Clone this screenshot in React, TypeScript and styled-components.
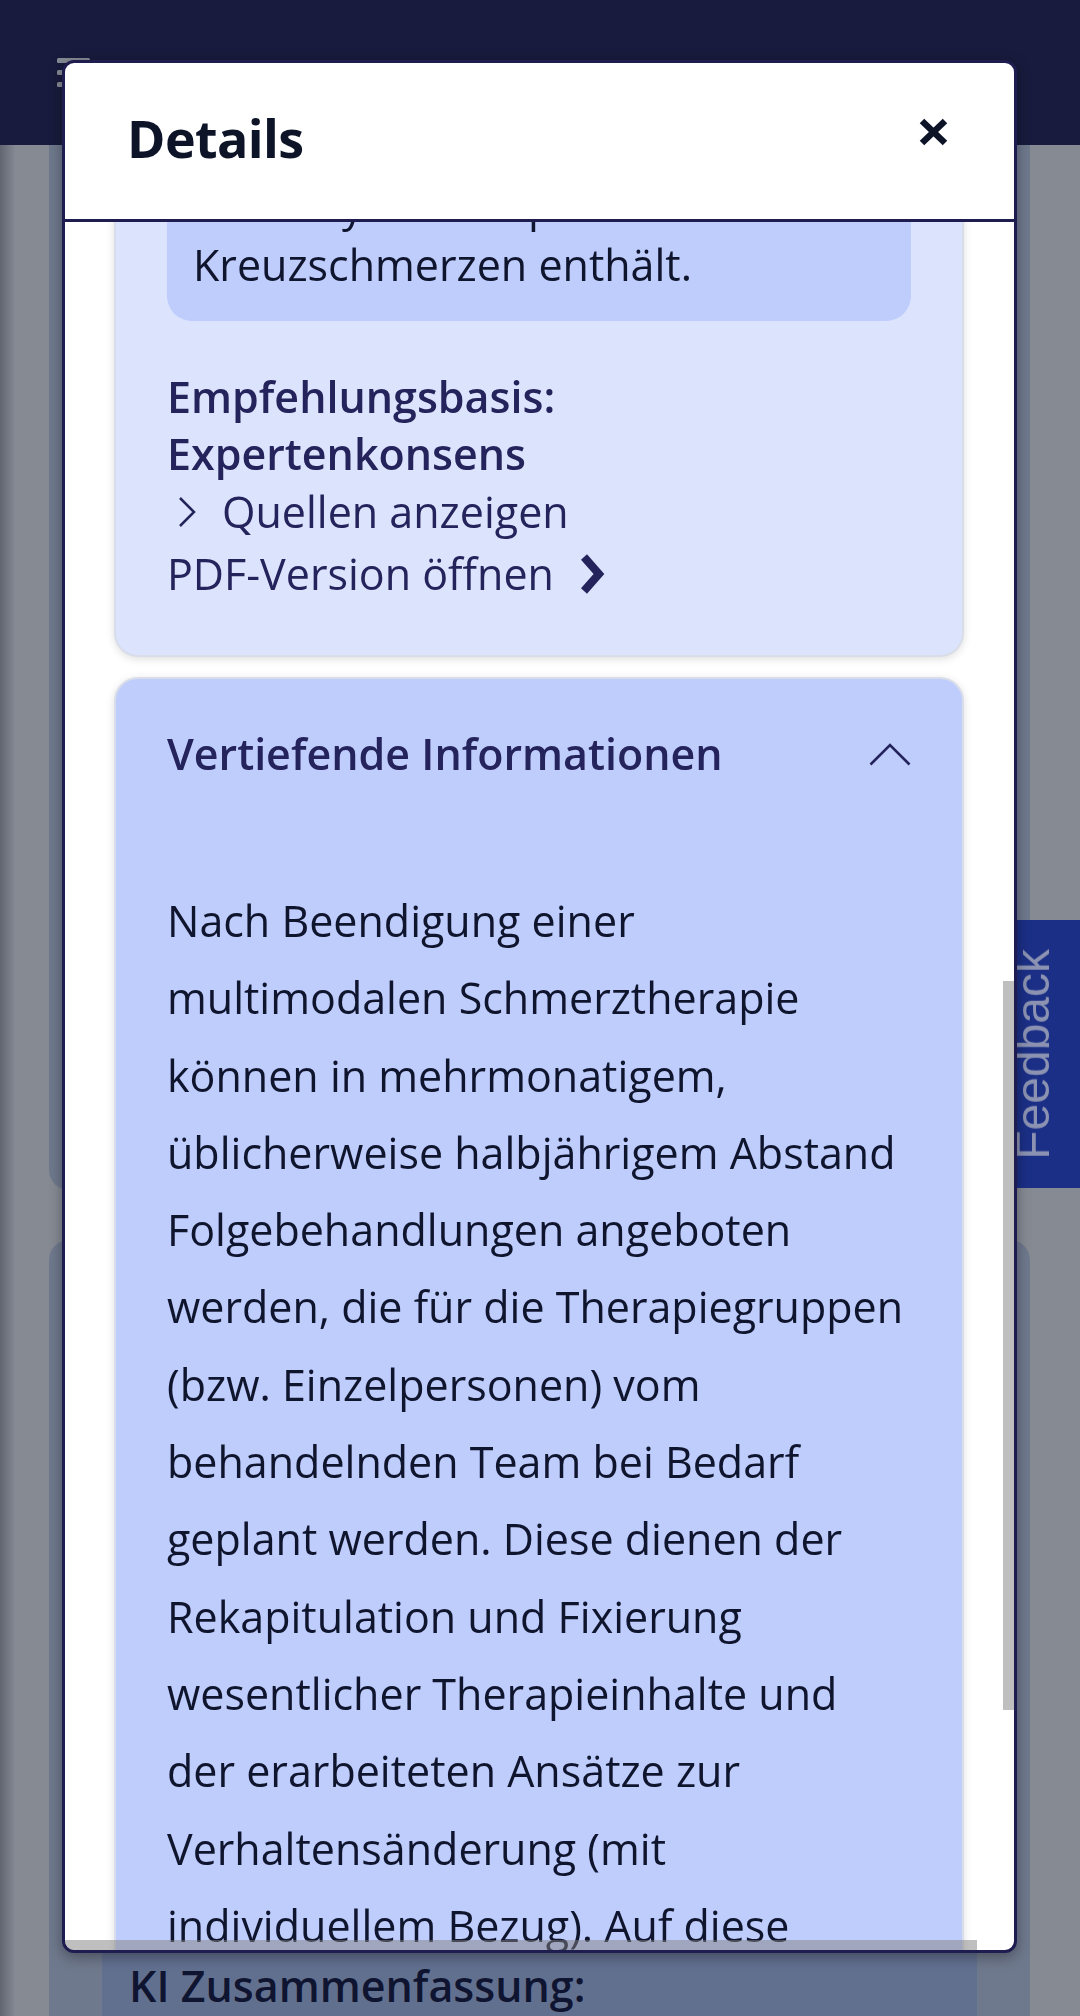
import React, { useLayoutEffect, useRef } from "react";
import styled, { createGlobalStyle } from "styled-components";


const GlobalStyle = createGlobalStyle`
	html, body {
		margin: 0;
		padding: 0;
	}

	body {
		width: 1080px;
		height: 2016px;
		overflow: hidden;
		background: #ffffff;
		font-family: "Open Sans", "Noto Sans", sans-serif;
	}

	* {
		box-sizing: border-box;
	}
`;


const NAVY = "#25235b";
const INK = "#10152e";


// ---------- page under the dialog ----------

const Page = styled.div`
	position: relative;
	width: 1080px;
	height: 2016px;
	overflow: hidden;
	background: linear-gradient(to right, #b3b5bb 0, #ffffff 16px);
`;

const TopBar = styled.header`
	height: 145px;
	background: #232153;
	display: flex;
	align-items: center;
	padding-left: 57px;
`;

const Main = styled.main`
	display: flex;
	flex-direction: column;
	gap: 50px;
	padding: 0 50px 0 49px;
`;

const BackCard = styled.div<{ $height: number; $radius: string }>`
	height: ${p => p.$height}px;
	background: #d1ddf3;
	border-radius: ${p => p.$radius};
`;

const SummaryBar = styled.div`
	position: fixed;
	left: 102px;
	top: 1925px;
	width: 875px;
	height: 110px;
	padding: 32px 27px 0;
	background: #b7cbf9;
	font-size: 43px;
	line-height: 57px;
	font-weight: 600;
	color: #111539;
`;

const Overlay = styled.div`
	position: fixed;
	inset: 0;
	background: rgba(13, 21, 39, 0.5);
	z-index: 10;
`;

const FeedbackTab = styled.button`
	position: fixed;
	left: 1005px;
	top: 920px;
	width: 75px;
	height: 268px;
	padding: 0;
	border: none;
	background: #1b2f86;
	display: flex;
	align-items: center;
	z-index: 20;

	span {
		writing-mode: vertical-rl;
		transform: rotate(180deg);
		font-family: "Liberation Sans", Arial, sans-serif;
		font-size: 48px;
		line-height: 55px;
		color: #8c93b2;
	}
`;


// ---------- dialog ----------

const Dialog = styled.div`
	position: fixed;
	left: 62px;
	top: 60px;
	width: 955px;
	height: 1893px;
	display: flex;
	flex-direction: column;
	background: #ffffff;
	border: 3px solid #1f1c4f;
	border-radius: 12px;
	overflow: hidden;
	box-shadow: 0 4px 14px rgba(0, 0, 0, 0.35);
	z-index: 30;
`;

const DialogHeader = styled.div`
	flex: none;
	height: 159px;
	display: flex;
	align-items: center;
	justify-content: space-between;
	padding: 0 66px 6px 62px;
	border-bottom: 3px solid #1f1c4f;

	h2 {
		margin: 0;
		font-size: 52px;
		line-height: 1.2;
		font-weight: 700;
		letter-spacing: -0.6px;
		color: #0e1428;
	}
`;

const CloseButton = styled.button`
	display: flex;
	padding: 0;
	margin-bottom: 12px;
	border: none;
	background: none;
`;

const BodyFrame = styled.div`
	position: relative;
	flex: 1;
	min-height: 0;
`;

const ScrollArea = styled.div`
	height: 100%;
	overflow-y: auto;
	overflow-x: hidden;
	padding: 40px 50px 60px 49px;
	scrollbar-width: none;

	&::-webkit-scrollbar {
		display: none;
	}
`;

const Thumb = styled.div<{ $vertical?: boolean }>`
	position: absolute;
	background: rgba(128, 128, 128, 0.5);
	${p => p.$vertical
		? "right: 0; top: 759px; width: 11px; height: 729px;"
		: "left: 0; bottom: 0; width: 912px; height: 10px;"}
`;

const Card = styled.section<{ $bg: string }>`
	background: ${p => p.$bg};
	border: 2px solid #d8dde9;
	border-radius: 24px;
	box-shadow: 0 2px 8px rgba(0, 0, 0, 0.13);
	padding: 0 51px 49px;
	color: ${NAVY};
	font-size: 43px;

	& + & {
		margin-top: 20px;
	}
`;

const CardHead = styled.div`
	display: flex;
	align-items: center;
	justify-content: space-between;
	padding: 46px 0;

	h3 {
		margin: 0;
		font-size: 43px;
		line-height: 57px;
		font-weight: 600;
		color: ${NAVY};
	}
`;

const Paragraph = styled.p<{ $lh: number }>`
	margin: 0;
	font-size: 43px;
	line-height: ${p => p.$lh}px;
	color: ${INK};
	white-space: nowrap;
`;

const QuoteBox = styled.div`
	margin-top: 40px;
	padding: 26px 26px 26px;
	background: #bfcdfd;
	border-radius: 25px;
`;

const Basis = styled.p`
	margin: 47px 0 0;
	font-weight: 600;
	line-height: 57px;
	color: ${NAVY};
`;

const LinkRow = styled.div<{ $h: number }>`
	display: flex;
	align-items: center;
	height: ${p => p.$h}px;
	line-height: ${p => p.$h}px;
	color: ${NAVY};
`;

const IconSlot = styled.span`
	width: 40px;
	display: flex;
	justify-content: center;
	margin-right: 15px;
`;

const TrailingIcon = styled.span`
	display: flex;
	margin-left: 22px;
`;

const Body = styled.div`
	padding-top: 54px;
`;


// ---------- icons ----------

function MenuIcon()
{
	return (
		<svg width="33" height="30" viewBox="0 0 33 30">
			<rect x="0" y="0" width="33" height="5" rx="1.5" fill="#ffffff" />
			<rect x="0" y="12" width="33" height="5" rx="1.5" fill="#ffffff" />
			<rect x="0" y="24" width="33" height="5" rx="1.5" fill="#ffffff" />
		</svg>
	);
}

function CloseIcon()
{
	return (
		<svg width="29" height="28" viewBox="0 0 29 28">
			<path d="M3 3 L26 25 M26 3 L3 25" stroke="#0e1428" strokeWidth="6.5" fill="none" />
		</svg>
	);
}

function ChevronThin()
{
	return (
		<svg width="22" height="32" viewBox="0 0 22 32">
			<polyline points="4,2 18,16 4,30" fill="none" stroke={NAVY} strokeWidth="2.5" />
		</svg>
	);
}

function ChevronBold()
{
	return (
		<svg width="30" height="42" viewBox="0 0 30 42">
			<polyline points="8,4 23,21 8,38" fill="none" stroke={NAVY} strokeWidth="8" />
		</svg>
	);
}

function ChevronUp()
{
	return (
		<svg width="42" height="24" viewBox="0 0 42 24">
			<polyline points="1.5,22.5 21,3 40.5,22.5" fill="none" stroke={NAVY} strokeWidth="2.6" />
		</svg>
	);
}


// ---------- content ----------

const quoteLines = [
	"Diese Empfehlung wurde aus der",
	"Nationalen VersorgungsLeitlinie",
	"übernommen, da die Leitlinie auch",
	"eine Physiotherapie bei chronischen",
	"Kreuzschmerzen enthält.",
];

const introLines = [
	"Patientinnen und Patienten mit",
	"chronischen Kreuzschmerzen sollen",
	"eine multimodale Behandlung",
	"erhalten.",
];

const detailLines = [
	"Nach Beendigung einer",
	"multimodalen Schmerztherapie",
	"können in mehrmonatigem,",
	"üblicherweise halbjährigem Abstand",
	"Folgebehandlungen angeboten",
	"werden, die für die Therapiegruppen",
	"(bzw. Einzelpersonen) vom",
	"behandelnden Team bei Bedarf",
	"geplant werden. Diese dienen der",
	"Rekapitulation und Fixierung",
	"wesentlicher Therapieinhalte und",
	"der erarbeiteten Ansätze zur",
	"Verhaltensänderung (mit",
	"individuellem Bezug). Auf diese",
	"Weise soll die Nachhaltigkeit des",
	"Behandlungserfolgs gesichert",
	"werden.",
];

function Lines(props: { lines: string[] })
{
	return (
		<>
			{props.lines.map((line, i) => (
				<React.Fragment key={i}>
					{i > 0 && <br />}
					{line}
				</React.Fragment>
			))}
		</>
	);
}


export default function App()
{
	const scrollRef = useRef<HTMLDivElement>(null);
	const anchorRef = useRef<HTMLParagraphElement>(null);

	useLayoutEffect(() =>
	{
		const area = scrollRef.current;
		const anchor = anchorRef.current;
		if (!area || !anchor) return;
		area.scrollTop = 0;
		const offset = anchor.getBoundingClientRect().top - area.getBoundingClientRect().top;
		area.scrollTop = offset - 146;
	}, []);

	return (
		<Page>
			<GlobalStyle />

			<TopBar>
				<MenuIcon />
			</TopBar>

			<Main>
				<BackCard $height={1045} $radius="0 0 20px 20px" />
				<BackCard $height={900} $radius="20px 20px 0 0" />
			</Main>

			<SummaryBar>KI Zusammenfassung:</SummaryBar>

			<Overlay />

			<FeedbackTab>
				<span>Feedback</span>
			</FeedbackTab>

			<Dialog>
				<DialogHeader>
					<h2>Details</h2>
					<CloseButton aria-label="Schließen">
						<CloseIcon />
					</CloseButton>
				</DialogHeader>

				<BodyFrame>
					<ScrollArea ref={scrollRef}>
						<Card $bg="#dce4fd">
							<CardHead>
								<h3>Empfehlung</h3>
								<ChevronUp />
							</CardHead>
							<Paragraph $lh={60}>
								<Lines lines={introLines} />
							</Paragraph>
							<QuoteBox>
								<Paragraph $lh={60}>
									<Lines lines={quoteLines} />
								</Paragraph>
							</QuoteBox>
							<Basis ref={anchorRef}>
								Empfehlungsbasis:
								<br />
								Expertenkonsens
							</Basis>
							<LinkRow $h={60}>
								<IconSlot><ChevronThin /></IconSlot>
								Quellen anzeigen
							</LinkRow>
							<LinkRow $h={64}>
								PDF-Version öffnen
								<TrailingIcon><ChevronBold /></TrailingIcon>
							</LinkRow>
						</Card>

						<Card $bg="#bfcdfd">
							<CardHead>
								<h3>Vertiefende Informationen</h3>
								<ChevronUp />
							</CardHead>
							<Body>
								<Paragraph $lh={77.3}>
									<Lines lines={detailLines} />
								</Paragraph>
							</Body>
						</Card>
					</ScrollArea>

					<Thumb $vertical />
					<Thumb />
				</BodyFrame>
			</Dialog>
		</Page>
	);
}
